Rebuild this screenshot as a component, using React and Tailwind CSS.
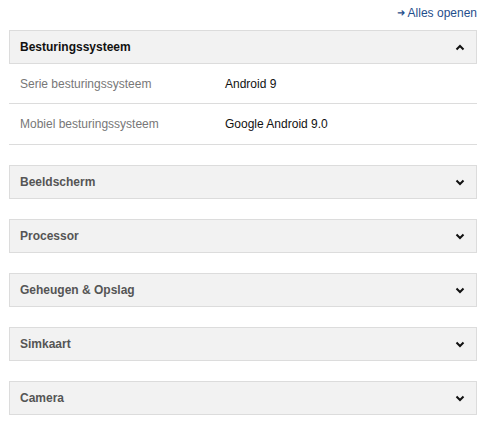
import { useState } from 'react';

const sections = [
  {
    title: 'Besturingssysteem',
    rows: [
      ['Serie besturingssysteem', 'Android 9'],
      ['Mobiel besturingssysteem', 'Google Android 9.0'],
    ],
  },
  { title: 'Beeldscherm', rows: [] },
  { title: 'Processor', rows: [] },
  { title: 'Geheugen & Opslag', rows: [] },
  { title: 'Simkaart', rows: [] },
  { title: 'Camera', rows: [] },
];

function Chevron({ up }) {
  return (
    <svg width="10" height="7" viewBox="0 0 10 7" className="shrink-0">
      <path
        d={up ? 'M1.5 5.5 L5 2 L8.5 5.5' : 'M1.5 1.5 L5 5 L8.5 1.5'}
        fill="none"
        stroke="#111"
        strokeWidth="2"
      />
    </svg>
  );
}

export default function App() {
  const [open, setOpen] = useState({ Besturingssysteem: true });

  return (
    <div className="w-[486px] bg-white px-[9px] pt-[5px] font-['Liberation_Sans',Arial,sans-serif] text-[12px]">
      <div className="flex justify-end h-[15px] items-center">
        <a className="text-[#1f4e8c] flex items-center gap-[3px] cursor-pointer">
          <span className="text-[10px] leading-none">➜</span>
          <span>Alles openen</span>
        </a>
      </div>
      <div className="mt-[10px] flex flex-col gap-[20px]">
        {sections.map((s) => {
          const isOpen = !!open[s.title];
          return (
            <div key={s.title}>
              <button
                type="button"
                onClick={() => setOpen({ ...open, [s.title]: !isOpen })}
                className="w-full h-[34px] bg-[#f2f2f2] border border-[#dcdcdc] flex items-center justify-between pl-[10px] pr-[11px] text-left"
              >
                <span className={`font-bold ${isOpen ? 'text-[#111]' : 'text-[#555]'}`}>{s.title}</span>
                <Chevron up={isOpen} />
              </button>
              {isOpen && (
                <div>
                  {s.rows.map(([label, value]) => (
                    <div key={label} className="flex items-center h-[40px] last:h-[41px] border-b border-[#dcdcdc]">
                      <span className="w-[216px] pl-[11px] text-[#777]">{label}</span>
                      <span className="text-[#111]">{value}</span>
                    </div>
                  ))}
                </div>
              )}
            </div>
          );
        })}
      </div>
    </div>
  );
}
